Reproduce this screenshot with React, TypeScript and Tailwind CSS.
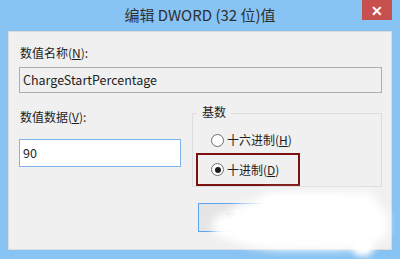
import React from 'react';

const font = { fontFamily: '"Noto Sans CJK SC", "Noto Sans", sans-serif' };

function Radio({ checked, label }: { checked?: boolean; label: React.ReactNode }) {
  return (
    <div className="flex items-center gap-[3px] text-[12px] text-[#1e1e1e]">
      <span className="flex h-[13px] w-[13px] items-center justify-center rounded-full border border-[#6d6d6d] bg-white">
        {checked && <span className="h-[6px] w-[6px] rounded-full bg-[#1a1a1a]" />}
      </span>
      <span>{label}</span>
    </div>
  );
}

export default function App() {
  return (
    <div className="relative h-[259px] w-[400px] overflow-hidden bg-[#87c3f3]" style={font}>
      <div className="relative flex h-[31px] items-center justify-center pb-[1px] text-[15px] text-[#2f2f2f]">
        编辑 DWORD (32 位)值
        <div className="absolute right-[8px] top-0 flex h-[20px] w-[30px] items-center justify-center bg-[#c7504f] text-[14px] font-bold leading-none text-white">
          ✕
        </div>
      </div>

      <div className="mx-[8px] h-[219px] border border-[#dcdcdc] bg-[#f0f0f0] pl-[10px] pr-[9px] pt-[12px] text-[12px] text-[#1e1e1e]">
        <div className="pl-[1px] leading-[18px]">
          数值名称(<span className="underline">N</span>):
        </div>
        <div className="mt-[5px] flex h-[26px] items-center border border-[#adadad] bg-[#f0f0f0] pl-[3px] text-[12.5px]">
          ChargeStartPercentage
        </div>

        <div className="mt-[15px] flex">
          <div className="flex w-[162px] flex-col">
            <div className="pl-[1px] leading-[18px]">
              数值数据(<span className="underline">V</span>):
            </div>
            <div className="mt-[13px] flex h-[28px] items-center border border-[#7eb4ea] bg-white pl-[3px] text-[12.5px]">
              90
            </div>
          </div>
          <div className="ml-[11px] mt-[5px] flex h-[74px] w-[190px] flex-col border border-[#dcdcdc] pl-[4px]">
            <div className="-mt-[11px] w-fit bg-[#f0f0f0] px-[5px] leading-[18px]">基数</div>
            <div className="mt-[10px] pl-[14px]">
              <Radio label={<>十六进制(<span className="underline">H</span>)</>} />
            </div>
            <div className="-ml-[1px] mt-[4px] flex h-[34px] w-[104px] items-center border-2 border-[#7b1212] pl-[13px]">
              <Radio checked label={<>十进制(<span className="underline">D</span>)</>} />
            </div>
          </div>
        </div>

        <div className="ml-[179px] mt-[16px] flex h-[29px] w-[80px] items-center justify-center border border-[#5aa3ee] bg-[#e5e5e5] text-[#bbbbbb]">
          确定
        </div>
      </div>

      <div className="pointer-events-none absolute left-[228px] top-[198px] h-[52px] w-[160px] rounded-[35%] bg-white blur-[4px]" />
      <div className="pointer-events-none absolute left-[212px] top-[214px] h-[24px] w-[50px] rounded-full bg-white blur-[4px]" />
      <div className="pointer-events-none absolute left-[258px] top-[192px] h-[26px] w-[120px] rounded-full bg-white blur-[5px]" />
      <div className="pointer-events-none absolute left-[352px] top-[238px] h-[18px] w-[22px] rounded-full bg-white blur-[3px]" />
    </div>
  );
}
